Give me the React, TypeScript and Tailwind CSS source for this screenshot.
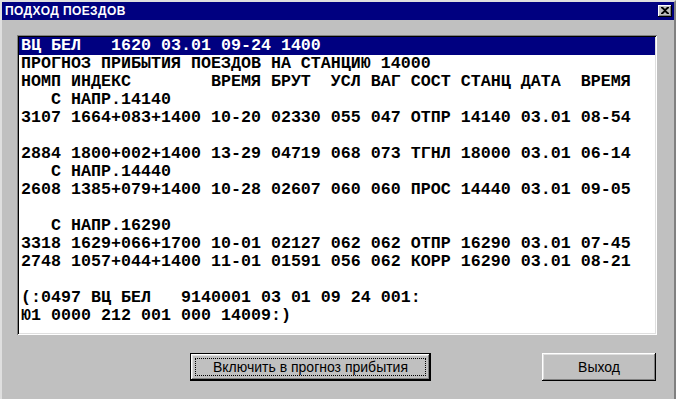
const lines = [
  "ВЦ БЕЛ   1620 03.01 09-24 1400",
  "ПРОГНОЗ ПРИБЫТИЯ ПОЕЗДОВ НА СТАНЦИЮ 14000",
  "НОМП ИНДЕКС        ВРЕМЯ БРУТ  УСЛ ВАГ СОСТ СТАНЦ ДАТА  ВРЕМЯ",
  "   С НАПР.14140",
  "3107 1664+083+1400 10-20 02330 055 047 ОТПР 14140 03.01 08-54",
  "",
  "2884 1800+002+1400 13-29 04719 068 073 ТГНЛ 18000 03.01 06-14",
  "   С НАПР.14440",
  "2608 1385+079+1400 10-28 02607 060 060 ПРОС 14440 03.01 09-05",
  "",
  "   С НАПР.16290",
  "3318 1629+066+1700 10-01 02127 062 062 ОТПР 16290 03.01 07-45",
  "2748 1057+044+1400 11-01 01591 056 062 КОРР 16290 03.01 08-21",
  "",
  "(:0497 ВЦ БЕЛ   9140001 03 01 09 24 001:",
  "Ю1 0000 212 001 000 14009:)",
];

function CloseButton() {
  return (
    <div className="flex h-[12px] w-[14px] items-center justify-center bg-[#c0c0c0] shadow-[inset_-1px_-1px_#000,inset_1px_1px_#fff,inset_-2px_-2px_#808080]">
      <svg width="8" height="7" viewBox="0 0 8 7" className="mt-[-1px]">
        <path d="M0 0h2l2 2 2-2h2v1L5 3.5 8 6v1H6L4 5 2 7H0V6l3-2.5L0 1z" fill="#000" />
      </svg>
    </div>
  );
}

export default function App() {
  return (
    <div className="h-[399px] w-[676px] overflow-hidden bg-[#c0c0c0] border-l-2 border-t-2 border-r-2 border-l-[#dfdfdf] border-t-[#dfdfdf] border-r-[#808080]">
      <div className="flex h-[18px] items-center justify-between bg-[#000080] pl-[3px] pr-[2px]">
        <span className="font-['Liberation_Sans',Arial,sans-serif] text-[12px] font-bold leading-none tracking-[0.4px] text-white">
          ПОДХОД ПОЕЗДОВ
        </span>
        <CloseButton />
      </div>

      <div className="ml-[15px] mt-[15px] h-[300px] w-[640px] bg-white p-[2px] shadow-[inset_1px_1px_#808080,inset_-1px_-1px_#fff,inset_2px_2px_#000,inset_-2px_-2px_#dfdfdf]">
        <div className="font-['Liberation_Mono','Courier_New',monospace] text-[16.67px] font-bold leading-[18px] text-black">
          {lines.map((l, i) => (
            <div
              key={i}
              className={
                i === 0
                  ? "h-[18px] whitespace-pre bg-[#000080] pl-[2px] text-white"
                  : "h-[18px] whitespace-pre pl-[2px]"
              }
            >
              {l}
            </div>
          ))}
        </div>
      </div>

      <div className="mt-[18px] flex font-['Liberation_Sans',Arial,sans-serif] text-[14px] text-black">
        <button className="ml-[188px] flex h-[28px] w-[241px] items-center justify-center border border-black bg-[#c0c0c0] p-0 shadow-[inset_-1px_-1px_#000,inset_1px_1px_#fff,inset_-2px_-2px_#808080,inset_2px_2px_#dfdfdf]">
          <span className="flex h-[18px] w-[231px] items-center justify-center border border-dotted border-black">
            Включить в прогноз прибытия
          </span>
        </button>
        <button className="ml-[111px] flex h-[28px] w-[114px] items-center justify-center bg-[#c0c0c0] p-0 shadow-[inset_-1px_-1px_#000,inset_1px_1px_#fff,inset_-2px_-2px_#808080,inset_2px_2px_#dfdfdf]">
          Выход
        </button>
      </div>
    </div>
  );
}
